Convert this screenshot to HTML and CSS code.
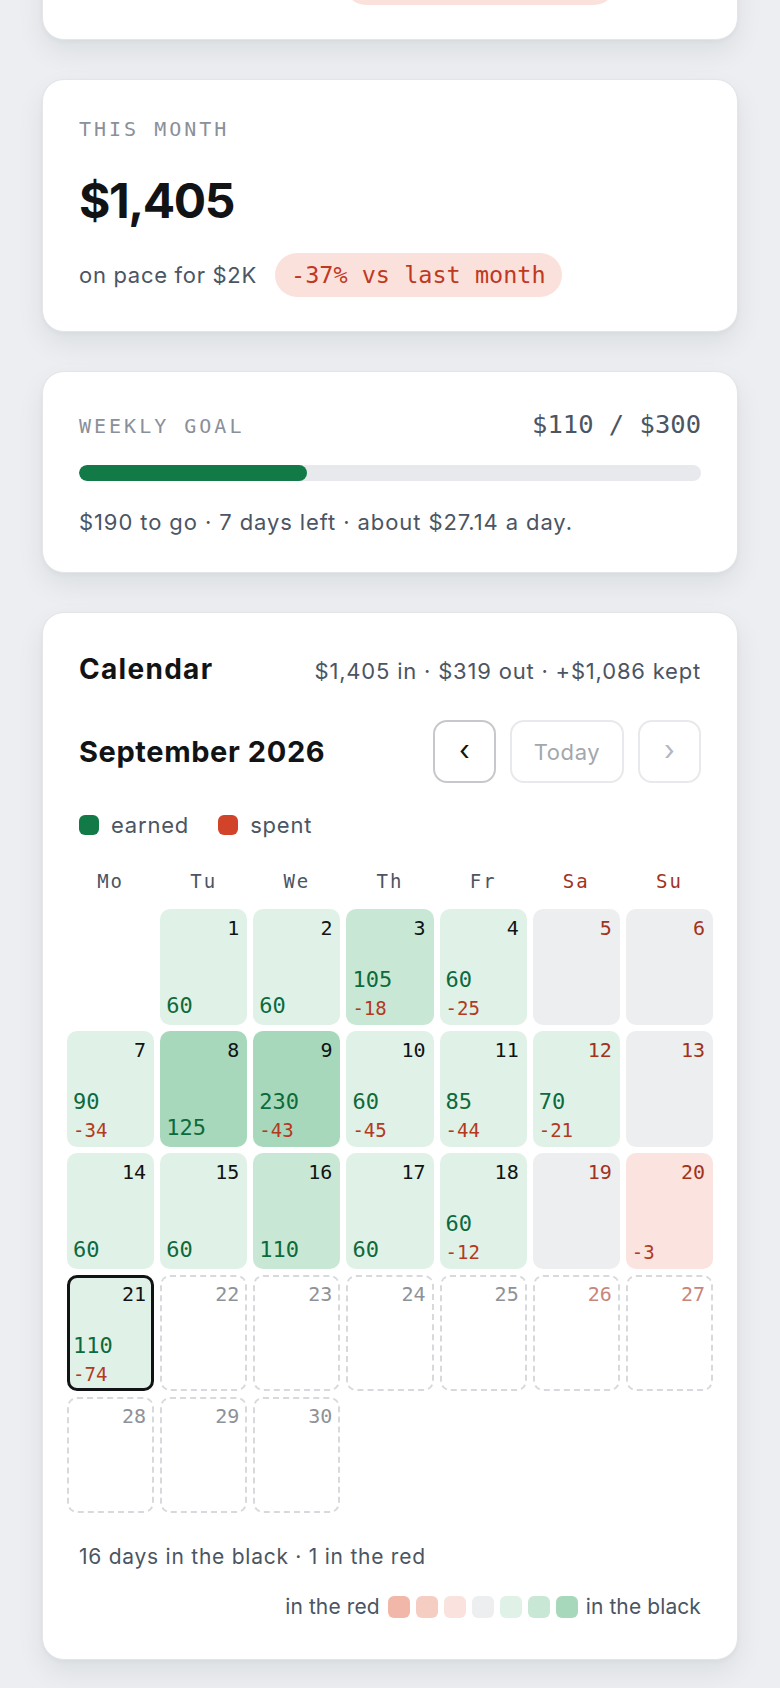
FILE: index.html
```html
<!DOCTYPE html>
<html>
<head>
    <meta charset="utf-8">
    <title>Earnings</title>
    <link rel="stylesheet" href="styles.css">
</head>
<body>
    <main class="screen">
        <section class="card stat">
            <div class="label">This week</div>
            <div class="amount">$110</div>
            <div class="stat-row">
                <span>on pace for $385 total</span>
                <span class="pill">+12% vs last week</span>
            </div>
        </section>

        <section class="card stat">
            <div class="label">This month</div>
            <div class="amount">$1,405</div>
            <div class="stat-row">
                <span>on pace for $2K</span>
                <span class="pill">-37% vs last month</span>
            </div>
        </section>

        <section class="card goal">
            <div class="goal-head">
                <div class="label">Weekly goal</div>
                <div class="goal-value">$110 / $300</div>
            </div>
            <div class="bar"><div class="bar-fill" style="width: 36.67%"></div></div>
            <p class="goal-note">$190 to go · 7 days left · about $27.14 a day.</p>
        </section>

        <section class="card calendar">
            <div class="cal-top">
                <h2 class="cal-title">Calendar</h2>
                <div class="cal-sum">$1,405 in · $319 out · +$1,086 kept</div>
            </div>

            <div class="cal-nav-row">
                <h3 class="month">September 2026</h3>
                <div class="nav">
                    <button class="nav-btn active">&lsaquo;</button>
                    <button class="nav-btn today">Today</button>
                    <button class="nav-btn">&rsaquo;</button>
                </div>
            </div>

            <div class="legend">
                <span class="legend-item"><i class="dot earned"></i>earned</span>
                <span class="legend-item"><i class="dot spent"></i>spent</span>
            </div>

            <div class="weekdays">
                <span>Mo</span><span>Tu</span><span>We</span><span>Th</span><span>Fr</span>
                <span class="we">Sa</span><span class="we">Su</span>
            </div>

            <div class="grid" id="cal-grid">
                <!-- days are filled in by the script below -->
            </div>

            <p class="cal-foot">16 days in the black · 1 in the red</p>

            <div class="scale">
                <span class="scale-label">in the red</span>
                <i class="sw r2"></i><i class="sw r1s"></i><i class="sw r0"></i><i class="sw n"></i>
                <i class="sw g1"></i><i class="sw g2"></i><i class="sw g3"></i>
                <span class="scale-label">in the black</span>
            </div>
        </section>
    </main>

    <script>
// день: [число, заработано, потрачено, уровень]
const days = [
    null,
    [1, 60, 0, 'g1'], [2, 60, 0, 'g1'], [3, 105, 18, 'g2'], [4, 60, 25, 'g1'],
    [5, 0, 0, 'n'], [6, 0, 0, 'n'],
    [7, 90, 34, 'g1'], [8, 125, 0, 'g3'], [9, 230, 43, 'g3'], [10, 60, 45, 'g1'],
    [11, 85, 44, 'g1'], [12, 70, 21, 'g1'], [13, 0, 0, 'n'],
    [14, 60, 0, 'g1'], [15, 60, 0, 'g1'], [16, 110, 0, 'g2'], [17, 60, 0, 'g1'],
    [18, 60, 12, 'g1'], [19, 0, 0, 'n'], [20, 0, 3, 'r1'],
    [21, 110, 74, 'g1']
];
const today = 21;
const grid = document.getElementById('cal-grid');

for (let i = 0; i < 30 + 1; i++) {
    const col = i % 7;
    const weekend = col >= 5;
    const entry = days[i];

    if (i === 0) {
        grid.insertAdjacentHTML('beforeend', '<div class="cell blank"></div>');
        continue;
    }

    const day = i;
    let classes = ['cell'];
    if (weekend) classes.push('we');

    let amounts = '';
    if (day <= today && entry) {
        classes.push(entry[3]);
        if (day === today) classes.push('today');
        if (entry[1]) amounts += `<span class="earn">${entry[1]}</span>`;
        if (entry[2]) amounts += `<span class="spend">-${entry[2]}</span>`;
    } else {
        classes.push('future');
    }

    const cell = `<div class="${classes.join(' ')}">
        <span class="num">${day}</span>
        <span class="amts">${amounts}</span>
    </div>`;
    grid.insertAdjacentHTML('beforeend', cell);
}
    </script>
</body>
</html>
```

FILE: styles.css
```css
body {
    margin: 0;
    background-color: #eceef1;
    font-family: Inter, "Noto Sans", sans-serif;
    color: #111315;
}

.screen {
    display: flex;
    flex-direction: column;
    gap: 39px;
    padding: 0 42px 40px;
    margin-top: -213px; /* страница прокручена вниз */
}

.card {
    background-color: #fff;
    border: 1px solid #e3e5e8;
    border-radius: 22px;
    padding: 34px 36px;
    box-shadow: 0 12px 28px rgba(20, 28, 40, 0.07), 0 2px 4px rgba(20, 28, 40, 0.04);
}

.label {
    font-family: "DejaVu Sans Mono", monospace;
    font-size: 20px;
    line-height: 30px;
    letter-spacing: 3px;
    text-transform: uppercase;
    color: #8a9099;
}

.amount {
    margin-top: 29px;
    font-size: 48px;
    line-height: 56px;
    font-weight: 700;
    letter-spacing: -0.03em;
}

.stat-row {
    display: flex;
    align-items: center;
    gap: 18px;
    margin-top: 24px;
    font-size: 22px;
    letter-spacing: 0.7px;
    color: #4b5563;
}

.pill {
    display: flex;
    align-items: center;
    height: 44px;
    padding: 0 16px;
    border-radius: 22px;
    background-color: #fbe1db;
    color: #c0391f;
    font-family: "DejaVu Sans Mono", monospace;
    font-size: 23.5px;
    letter-spacing: 0;
}

/* weekly goal */

.goal-head {
    display: flex;
    justify-content: space-between;
    align-items: baseline;
}

.goal-value {
    font-family: "DejaVu Sans Mono", monospace;
    font-size: 25.5px;
    line-height: 36px;
    color: #4b5563;
}

.bar {
    height: 16px;
    margin-top: 23px;
    border-radius: 8px;
    background-color: #e8e9ec;
    overflow: hidden;
}

.bar-fill {
    height: 100%;
    border-radius: 8px;
    background-color: #117a47;
}

.goal-note {
    margin: 25px 0 0;
    font-size: 22px;
    line-height: 32px;
    letter-spacing: 0.9px;
    color: #4b5563;
}

/* calendar */

.calendar {
    padding-bottom: 37px;
}

.cal-top {
    display: flex;
    justify-content: space-between;
    align-items: baseline;
    line-height: 44px;
}

.cal-title {
    margin: 0;
    font-size: 28px;
    font-weight: 700;
    letter-spacing: 1.3px;
}

.cal-sum {
    font-size: 22px;
    letter-spacing: 0.8px;
    color: #4b5563;
}

.cal-nav-row {
    display: flex;
    justify-content: space-between;
    align-items: center;
    margin-top: 27px;
}

.month {
    margin: 0;
    font-size: 29px;
    font-weight: 700;
    letter-spacing: 0.6px;
}

.nav {
    display: flex;
    gap: 14px;
}

.nav-btn {
    display: flex;
    align-items: center;
    justify-content: center;
    width: 63px;
    height: 63px;
    padding: 0 0 3px;
    box-sizing: border-box;
    border: 2px solid #e8e9ec;
    border-radius: 14px;
    background-color: #fff;
    font-family: Inter, sans-serif;
    font-size: 28px;
    color: #b4b8bd;
}

.nav-btn.today {
    width: 114px;
    padding: 0;
    font-size: 22px;
    letter-spacing: 0.6px;
    color: #a3a7ad;
}

.nav-btn.active {
    border-color: #c6c8cc;
    color: #111315;
}

.legend {
    display: flex;
    gap: 29px;
    margin-top: 27px;
    font-size: 22px;
    line-height: 30px;
    letter-spacing: 0.8px;
    color: #4b5563;
}

.legend-item {
    display: flex;
    align-items: center;
    gap: 12px;
}

.dot {
    width: 20px;
    height: 20px;
    border-radius: 6px;
}

.dot.earned { background-color: #117a47; }
.dot.spent { background-color: #d2442a; }

.weekdays {
    display: grid;
    grid-template-columns: repeat(7, 1fr);
    gap: 6px;
    margin: 27px -12px 0;
    font-family: "DejaVu Sans Mono", monospace;
    font-size: 19px;
    line-height: 28px;
    letter-spacing: 2px;
    text-align: center;
    color: #4b5563;
}

.weekdays .we {
    color: #a3321c;
}

.grid {
    display: grid;
    grid-template-columns: repeat(7, 1fr);
    grid-auto-rows: 116px;
    gap: 6px;
    margin: 14px -12px 0;
}

.cell {
    display: flex;
    flex-direction: column;
    justify-content: space-between;
    box-sizing: border-box;
    padding: 7px 8px 6px 6px;
    border-radius: 10px;
    font-family: "DejaVu Sans Mono", monospace;
}

.num {
    text-align: right;
    font-size: 20px;
    line-height: 24px;
    color: #111315;
}

.we .num {
    color: #a3321c;
}

.amts {
    display: flex;
    flex-direction: column;
    gap: 4px;
}

.earn {
    font-size: 22px;
    line-height: 26px;
    color: #0c6a3c;
}

.spend {
    font-size: 19px;
    line-height: 22px;
    color: #b3391f;
}

.g1 { background-color: #e0f1e7; }
.g2 { background-color: #c8e8d5; }
.g3 { background-color: #a7d8bb; }
.n { background-color: #eceef0; }
.r1 { background-color: #fbe4df; }

.cell.today {
    border: 3px solid #111315;
    padding: 4px 5px 3px 3px;
}

.cell.future {
    border: 2px dashed #d7d9dc;
    padding: 5px 6px 4px 4px;
}

.cell.future .num {
    color: #8e9298;
}

.cell.future.we .num {
    color: #c98579;
}

.cal-foot {
    margin: 29px 0 0;
    font-size: 21px;
    line-height: 30px;
    letter-spacing: 0.75px;
    color: #4b5563;
}

.scale {
    display: flex;
    justify-content: flex-end;
    align-items: center;
    gap: 6px;
    margin-top: 20px;
    font-size: 21px;
    line-height: 30px;
    letter-spacing: 0.1px;
    color: #4b5563;
}

.scale-label:first-child {
    margin-right: 2px;
}

.scale-label:last-child {
    margin-left: 2px;
}

.sw {
    width: 22px;
    height: 22px;
    border-radius: 6px;
}

.sw.r2 { background-color: #f1b7a8; }
.sw.r1s { background-color: #f6cdc3; }
.sw.r0 { background-color: #fae3de; }
.sw.n { background-color: #eceef0; }
```
